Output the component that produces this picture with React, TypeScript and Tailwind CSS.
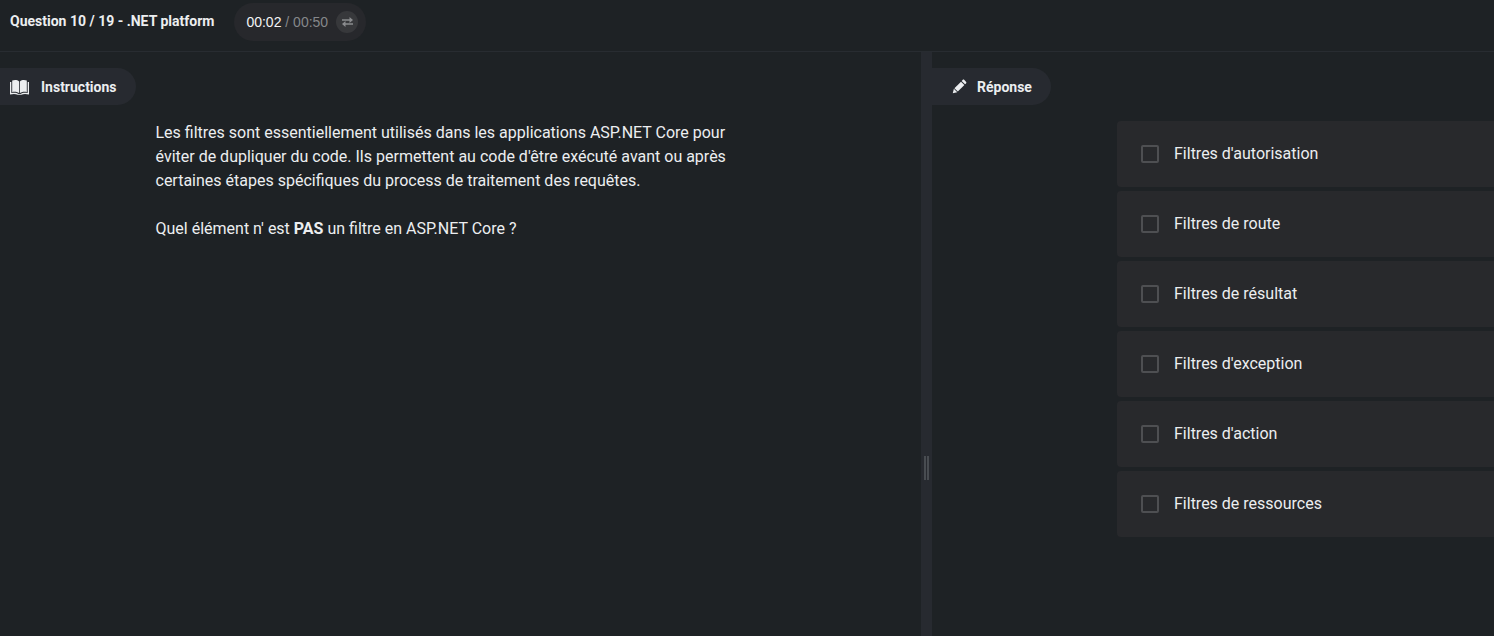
import type { ReactNode } from "react";

const answers = [
  "Filtres d'autorisation",
  "Filtres de route",
  "Filtres de résultat",
  "Filtres d'exception",
  "Filtres d'action",
  "Filtres de ressources",
];

function BookIcon() {
  return (
    <svg width="19" height="16" viewBox="0 0 19 16" fill="currentColor" aria-hidden="true">
      <path d="M2.200 1.600C4.400.7 7.300.8 9.100 2.400v11.800C7.400 12.600 4.600 12.300 2.200 13Z" />
      <path d="M16.800 1.600C14.600.7 11.700.8 9.900 2.400v11.800c1.700-1.600 4.500-1.900 6.900-1.200Z" />
      <path d="M0 3h1.300v11c2.600-.7 5.400-.4 7.200.9h2c1.800-1.300 4.600-1.600 7.200-.9V3H19v12.500c-3-.7-5.800-.7-7.700.3H7.700c-1.900-1-4.700-1-7.700-.3Z" />
    </svg>
  );
}

function PencilIcon() {
  return (
    <svg width="15" height="15" viewBox="0 0 16 16" fill="currentColor" aria-hidden="true">
      <path d="m.8 15.200 1.200-4.800 3.600 3.600Z" />
      <path d="m2.600 9.800 7-7 3.600 3.600-7 7Z" />
      <path d="m10.300 2.100 1-1c.6-.6 1.300-.6 1.900 0l1.700 1.700c.6.6.6 1.300 0 1.900l-1 1Z" />
    </svg>
  );
}

function SwapIcon() {
  return (
    <svg width="11" height="10" viewBox="0 0 11 10" fill="currentColor" aria-hidden="true">
      <path d="M0 2.200h7.500V0L11 3 7.500 6V3.800H0Z" />
      <path d="M11 6.200H3.500V4L0 7l3.500 3V7.800H11Z" />
    </svg>
  );
}

function PanelTitle({ icon, children }: { icon: ReactNode; children: ReactNode }) {
  return (
    <h2 className="flex h-[37px] w-fit items-center rounded-r-full bg-[#272a30] pr-[19px] text-sm font-bold">
      {icon}
      {children}
    </h2>
  );
}

export default function App() {
  return (
    <div className="flex min-h-screen flex-col overflow-hidden bg-[#1e2225] font-['Roboto',sans-serif] text-[#eceef0]">
      <header className="flex items-start gap-5 border-b border-[#282c31] pt-[3px] pb-2.5 pl-2.5">
        <h1 className="py-2 text-sm font-bold">Question 10 / 19 - .NET platform</h1>
        <div className="flex h-[38px] items-center gap-2 rounded-full bg-[#27282c] pr-2 pl-3">
          <p className="font-['Liberation_Sans',sans-serif] text-sm text-[#85878a]">
            <span className="text-[#f4f4f5]">00:02</span> / 00:50
          </p>
          <button
            type="button"
            aria-label="Changer l'affichage du temps"
            className="flex size-[22px] items-center justify-center rounded-full bg-[#37383b] text-[#8b8c8f]"
          >
            <SwapIcon />
          </button>
        </div>
      </header>

      <main className="flex grow">
        <section className="min-w-0 flex-[921_1_0%] pt-4">
          <PanelTitle icon={<span className="mr-3 ml-2.5"><BookIcon /></span>}>Instructions</PanelTitle>
          <div className="mx-auto mt-4 w-full max-w-[610px] text-base">
            <p>
              Les filtres sont essentiellement utilisés dans les applications ASP.NET Core pour éviter de dupliquer du
              code. Ils permettent au code d'être exécuté avant ou après certaines étapes spécifiques du process de
              traitement des requêtes.
            </p>
            <p className="mt-6">
              Quel élément n' est <strong className="font-bold">PAS</strong> un filtre en ASP.NET Core ?
            </p>
          </div>
        </section>

        <div
          role="separator"
          aria-orientation="vertical"
          className="flex w-[11px] shrink-0 cursor-col-resize items-end justify-center gap-px bg-[#272a30] pb-39"
        >
          <span className="h-6 w-0.5 bg-[#484c51]" />
          <span className="h-6 w-0.5 bg-[#484c51]" />
        </div>

        <section className="min-w-0 flex-[562_1_0%] pt-4">
          <PanelTitle icon={<span className="mr-2.5 ml-5"><PencilIcon /></span>}>Réponse</PanelTitle>
          <ul className="mt-4 ml-[185px] flex flex-col gap-1">
            {answers.map((answer) => (
              <li key={answer}>
                <label className="flex h-16.5 cursor-pointer items-center gap-[15px] rounded-l bg-[#28292c] pl-6 text-base">
                  <input
                    type="checkbox"
                    className="size-[18px] shrink-0 appearance-none rounded-xs border-2 border-[#4e4f52] checked:bg-[#8b8c8f]"
                  />
                  {answer}
                </label>
              </li>
            ))}
          </ul>
        </section>
      </main>
    </div>
  );
}
